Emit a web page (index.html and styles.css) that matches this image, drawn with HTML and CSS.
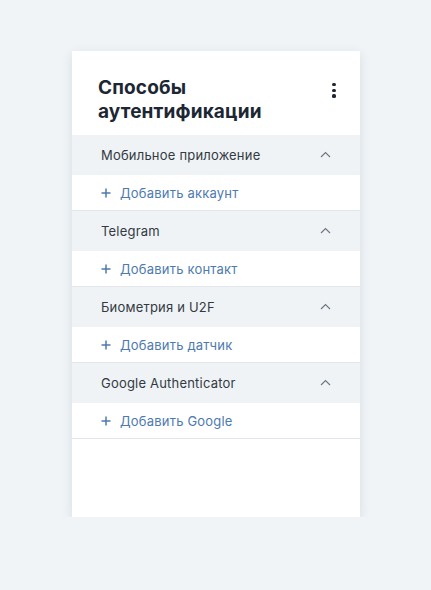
FILE: index.html
```html
<!DOCTYPE html>
<html lang="ru">
<head>
<meta charset="utf-8">
<link rel="stylesheet" href="styles.css">
</head>
<body>
<div class="page">
  <div class="card">
    <div class="card-head">
      <h1 class="title">Способы аутентификации</h1>
      <button class="more" aria-label="Меню">
        <span class="dot"></span><span class="dot"></span><span class="dot"></span>
      </button>
    </div>
    <div class="group">
      <div class="group-head">
        <span>Мобильное приложение</span>
        <svg class="chev" width="11" height="7" viewBox="0 0 11 7"><path d="M1 6 L5.5 1.5 L10 6" fill="none" stroke="#6b7580" stroke-width="1.1"/></svg>
      </div>
      <div class="group-item"><svg class="plus" width="10" height="10" viewBox="0 0 10 10"><path d="M5 0.5 V9.5 M0.5 5 H9.5" stroke="#4d7ab0" stroke-width="1.5"/></svg><span>Добавить аккаунт</span></div>
    </div>
    <div class="group">
      <div class="group-head">
        <span>Telegram</span>
        <svg class="chev" width="11" height="7" viewBox="0 0 11 7"><path d="M1 6 L5.5 1.5 L10 6" fill="none" stroke="#6b7580" stroke-width="1.1"/></svg>
      </div>
      <div class="group-item"><svg class="plus" width="10" height="10" viewBox="0 0 10 10"><path d="M5 0.5 V9.5 M0.5 5 H9.5" stroke="#4d7ab0" stroke-width="1.5"/></svg><span>Добавить контакт</span></div>
    </div>
    <div class="group">
      <div class="group-head">
        <span>Биометрия и U2F</span>
        <svg class="chev" width="11" height="7" viewBox="0 0 11 7"><path d="M1 6 L5.5 1.5 L10 6" fill="none" stroke="#6b7580" stroke-width="1.1"/></svg>
      </div>
      <div class="group-item"><svg class="plus" width="10" height="10" viewBox="0 0 10 10"><path d="M5 0.5 V9.5 M0.5 5 H9.5" stroke="#4d7ab0" stroke-width="1.5"/></svg><span>Добавить датчик</span></div>
    </div>
    <div class="group">
      <div class="group-head">
        <span>Google Authenticator</span>
        <svg class="chev" width="11" height="7" viewBox="0 0 11 7"><path d="M1 6 L5.5 1.5 L10 6" fill="none" stroke="#6b7580" stroke-width="1.1"/></svg>
      </div>
      <div class="group-item"><svg class="plus" width="10" height="10" viewBox="0 0 10 10"><path d="M5 0.5 V9.5 M0.5 5 H9.5" stroke="#4d7ab0" stroke-width="1.5"/></svg><span>Добавить Google</span></div>
    </div>
  </div>
</div>
</body>
</html>
```
FILE: styles.css
```css
html, body {
  margin: 0;
  padding: 0;
  background: #f0f4f7;
  font-family: Inter, "Noto Sans", sans-serif;
}
.page {
  padding: 51px 0 0 72px;
}
.card {
  width: 288px;
  height: 466px;
  background: #ffffff;
  box-shadow: 0 3px 10px rgba(40, 60, 80, 0.12);
  box-sizing: border-box;
}
.card-head {
  height: 84px;
  display: flex;
  justify-content: space-between;
  align-items: flex-start;
  padding: 25px 23px 0 26px;
  box-sizing: border-box;
}
.title {
  margin: 0;
  font-size: 19px;
  line-height: 24px;
  font-weight: 700;
  color: #1c2733;
  width: 190px;
  letter-spacing: 0.15px;
}
.more {
  border: 0;
  background: none;
  padding: 0;
  margin-top: 7px;
  display: flex;
  flex-direction: column;
  gap: 2.5px;
  align-items: center;
  width: 6px;
}
.dot {
  width: 3.2px;
  height: 3.2px;
  border-radius: 50%;
  background: #1c2733;
}
.group {
  border-bottom: 1px solid #e3e7eb;
}
.group-head {
  height: 40px;
  background: #eff3f6;
  display: flex;
  align-items: center;
  justify-content: space-between;
  padding: 0 29px 0 29px;
  font-size: 13px;
  color: #333a42;
  letter-spacing: 0.2px;
}
.chev {
  display: block;
  margin-top: -2px;
}
.group-item {
  height: 35px;
  display: flex;
  align-items: center;
  padding: 0 0 0 29px;
  font-size: 13px;
  color: #4d7ab0;
  letter-spacing: 0.2px;
}
.plus {
  display: block;
  margin-right: 9px;
}
```
